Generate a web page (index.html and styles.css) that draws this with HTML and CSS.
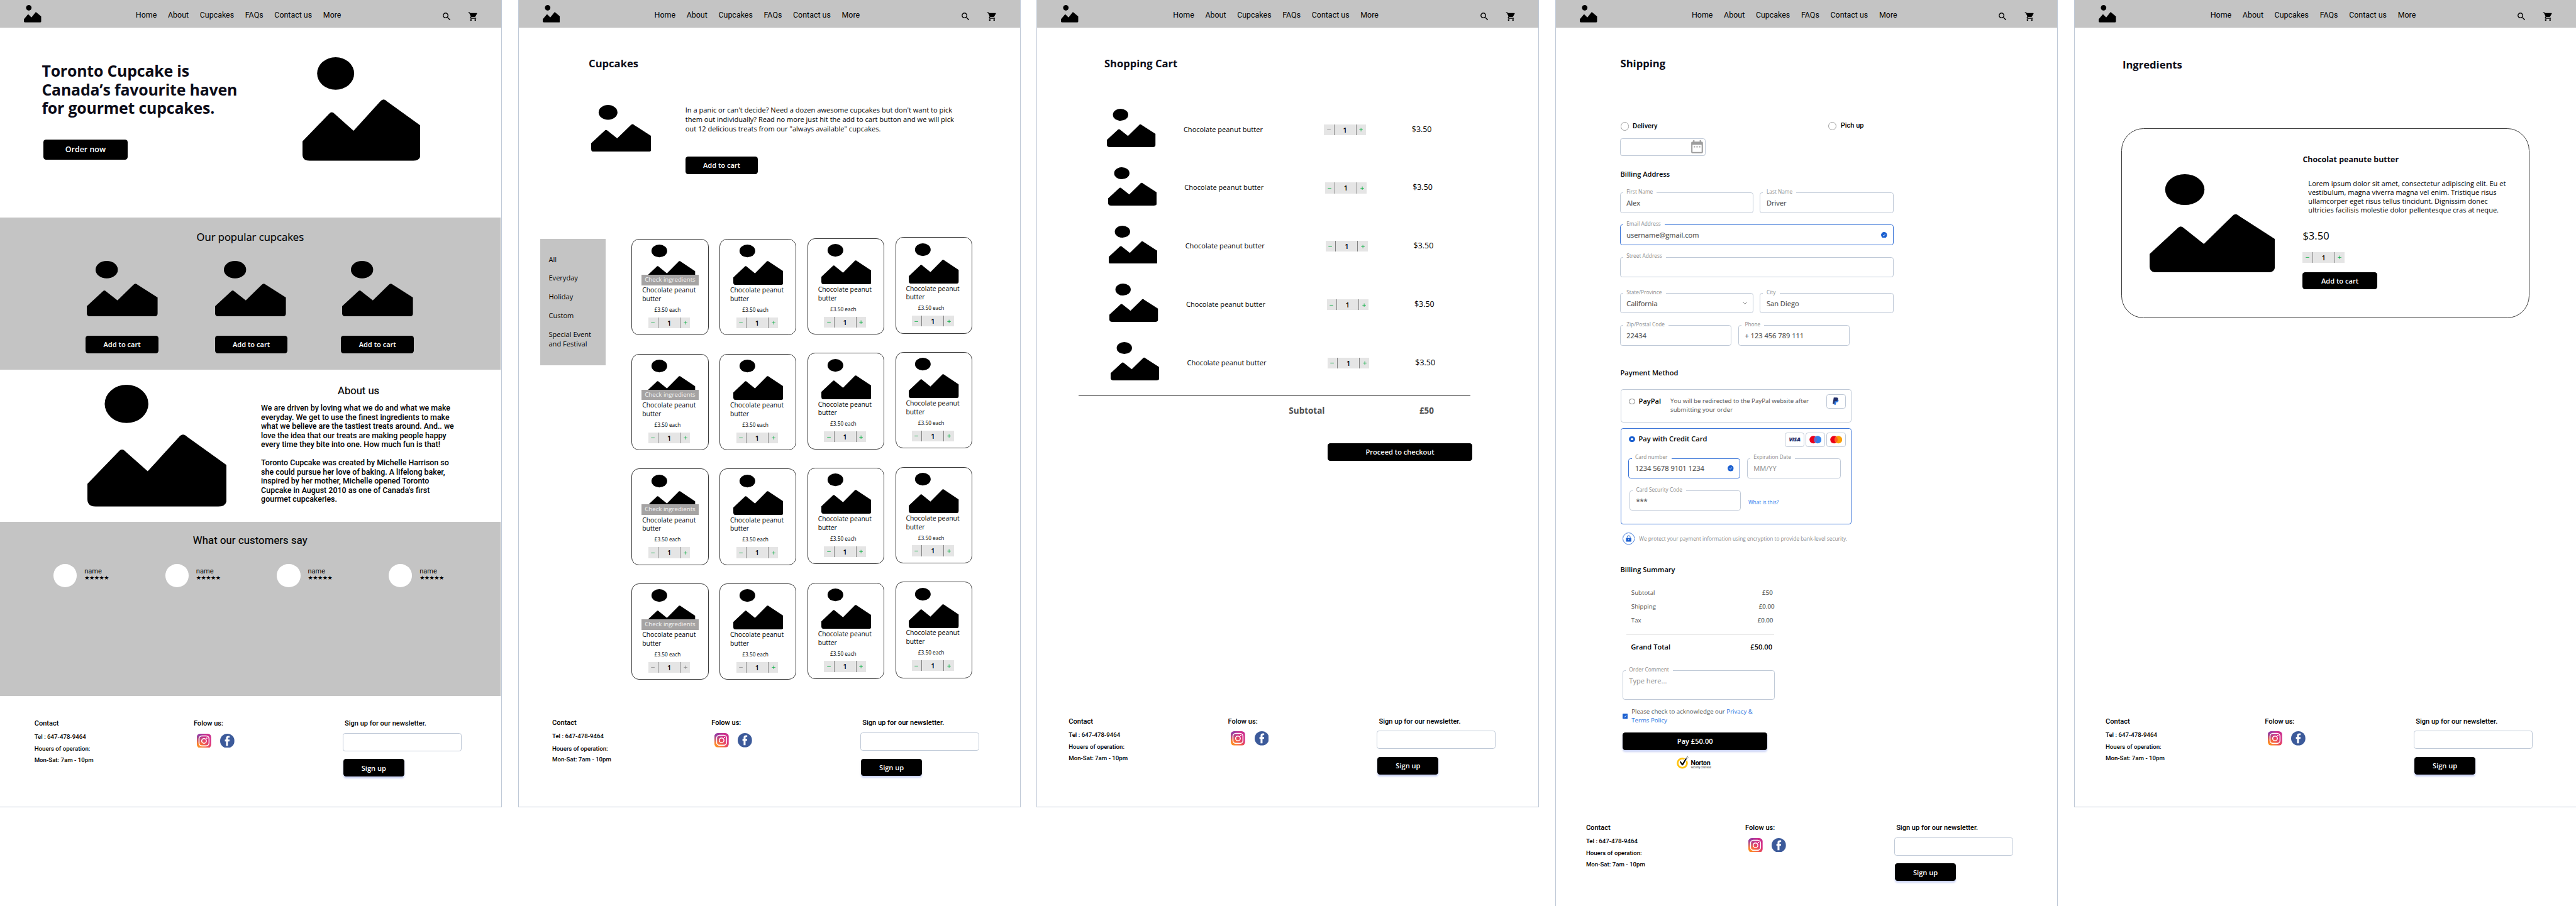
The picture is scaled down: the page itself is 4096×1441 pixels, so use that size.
FILE: index.html
```html
<!DOCTYPE html>
<html lang="en">
<head>
<meta charset="utf-8">
<title>Toronto Cupcake wireframes</title>
<link rel="stylesheet" href="styles.css">
</head>
<body>
<svg class="defs" width="0" height="0">
  <defs>
    <linearGradient id="ig" x1="0" y1="1" x2="1" y2="0">
      <stop offset="0" stop-color="#ffa31a"/><stop offset=".3" stop-color="#f76b3c"/><stop offset=".65" stop-color="#d92e7f"/><stop offset="1" stop-color="#c42f95"/>
    </linearGradient>
    <radialGradient id="ig2" cx="0" cy="0" r=".7"><stop offset="0" stop-color="#7a3ab8"/><stop offset="1" stop-color="#7a3ab8" stop-opacity="0"/></radialGradient>
    <symbol id="pic" viewBox="0 0 100 100" preserveAspectRatio="none">
      <circle cx="28.1" cy="15.7" r="15.7"/>
      <path d="M0 81.3 22.3 55Q24.8 51.4 27.5 55L43.3 71 65.7 43Q68.5 38.8 71.8 42.8L100 65.9V94Q100 100 94 100H6Q0 100 0 94Z"/>
    </symbol>
    <symbol id="search" viewBox="0 0 24 24"><path d="M15.5 14h-.79l-.28-.27A6.471 6.471 0 0 0 16 9.5 6.5 6.5 0 1 0 9.5 16c1.61 0 3.09-.59 4.23-1.57l.27.28v.79l5 4.99L20.49 19l-4.99-5zm-6 0C7.01 14 5 11.99 5 9.5S7.01 5 9.5 5 14 7.01 14 9.5 11.99 14 9.5 14z"/></symbol>
    <symbol id="cart" viewBox="0 0 24 24"><path d="M7 18c-1.1 0-1.99.9-1.99 2S5.9 22 7 22s2-.9 2-2-.9-2-2-2zM1 2v2h2l3.6 7.59-1.35 2.45c-.16.28-.25.61-.25.96 0 1.1.9 2 2 2h12v-2H7.42c-.14 0-.25-.11-.25-.25l.03-.12.9-1.63h7.45c.75 0 1.41-.41 1.75-1.03l3.58-6.49A1.003 1.003 0 0 0 20 4H5.21l-.94-2H1zm16 16c-1.1 0-1.99.9-1.99 2s.89 2 1.99 2 2-.9 2-2-.9-2-2-2z"/></symbol>
    <symbol id="calendar" viewBox="0 0 24 24"><path d="M9 11H7v2h2v-2zm4 0h-2v2h2v-2zm4 0h-2v2h2v-2zm2-7h-1V2h-2v2H8V2H6v2H5c-1.11 0-1.99.9-1.99 2L3 20c0 1.1.89 2 2 2h14c1.1 0 2-.9 2-2V6c0-1.1-.9-2-2-2zm0 16H5V9h14v11z"/></symbol>
    <symbol id="minus" viewBox="0 0 10 10"><path d="M.5 5.5h9" stroke="currentColor" stroke-width="1.3"/></symbol>
    <symbol id="plus" viewBox="0 0 10 10"><path d="M.5 5.5h9M5 1v9" stroke="currentColor" stroke-width="1.3"/></symbol>
    <symbol id="ok" viewBox="0 0 14 14"><circle cx="7" cy="7" r="7" fill="#1a5fd0"/><path d="M4.3 7.4 6.2 9.2 9.6 5" fill="none" stroke="#fff" stroke-width="1.1"/></symbol>
    <symbol id="instagram" viewBox="0 0 33 33"><rect width="33" height="33" rx="8" fill="url(#ig)"/><rect width="33" height="33" rx="8" fill="url(#ig2)"/><rect x="5" y="5" width="23" height="23" rx="6.5" fill="none" stroke="#fff" stroke-width="2.2"/><circle cx="16.5" cy="16.5" r="5.4" fill="none" stroke="#fff" stroke-width="2.2"/><circle cx="23" cy="10" r="1.5" fill="#fff"/></symbol>
    <symbol id="facebook" viewBox="0 0 33 33"><circle cx="16.5" cy="16.5" r="16.5" fill="#3c5a9a"/><path d="M13.6 28V17.6H11v-4.1h2.6v-3.1c0-3.6 1.8-5.4 5.3-5.4h3v4h-2.1c-1.4 0-1.8.7-1.8 1.9v2.6h3.9l-.5 4.1H18V28z" fill="#fff"/></symbol>
  </defs>
</svg>
<div class="board">

<section class="frame">
  <header class="top"><svg class="logo"><use href="#pic"/></svg><nav><a>Home</a><a>About</a><a>Cupcakes</a><a>FAQs</a><a>Contact us</a><a>More</a></nav><svg class="ico search"><use href="#search"/></svg><svg class="ico"><use href="#cart"/></svg></header>
  <div class="hero">
    <div class="hero-copy"><h1>Toronto Cupcake is<br>Canada’s favourite haven<br>for gourmet cupcakes.</h1><button class="btn order">Order now</button></div>
    <svg class="hero-pic"><use href="#pic"/></svg>
  </div>
  <div class="popular">
    <h2>Our popular cupcakes</h2>
    <div class="trio">
      <div><svg><use href="#pic"/></svg><button class="btn">Add to cart</button></div>
      <div><svg><use href="#pic"/></svg><button class="btn">Add to cart</button></div>
      <div><svg><use href="#pic"/></svg><button class="btn">Add to cart</button></div>
    </div>
  </div>
  <div class="about">
    <svg><use href="#pic"/></svg>
    <div class="about-copy"><h2>About us</h2>
      <p>We are driven by loving what we do and what we make<br>everyday. We get to use the finest ingredients to make<br>what we believe are the tastiest treats around. And.. we<br>love the idea that our treats are making people happy<br>every time they bite into one. How much fun is that!</p>
      <p>Toronto Cupcake was created by Michelle Harrison so<br>she could pursue her love of baking. A lifelong baker,<br>inspired by her mother, Michelle opened Toronto<br>Cupcake in August 2010 as one of Canada's first<br>gourmet cupcakeries.</p></div>
  </div>
  <div class="customers">
    <h2>What our customers say</h2>
    <div class="people">
      <div class="person"><i></i><div>name<b>★★★★★</b></div></div>
      <div class="person"><i></i><div>name<b>★★★★★</b></div></div>
      <div class="person"><i></i><div>name<b>★★★★★</b></div></div>
      <div class="person"><i></i><div>name<b>★★★★★</b></div></div>
    </div>
  </div>
  <footer>
    <div class="contact"><h4>Contact</h4><p>Tel : 647-478-9464</p><p>Houers of operation:</p><p>Mon-Sat: 7am - 10pm</p></div>
    <div class="social"><h4>Folow us:</h4><div><svg><use href="#instagram"/></svg><svg><use href="#facebook"/></svg></div></div>
    <div class="news"><h4>Sign up for our newsletter.</h4><span class="box"></span><button class="btn glow">Sign up</button></div>
  </footer>
</section>

<section class="frame f2">
  <header class="top"><svg class="logo"><use href="#pic"/></svg><nav><a>Home</a><a>About</a><a>Cupcakes</a><a>FAQs</a><a>Contact us</a><a>More</a></nav><svg class="ico search"><use href="#search"/></svg><svg class="ico"><use href="#cart"/></svg></header>
  <h3 class="title">Cupcakes</h3>
  <div class="intro">
    <svg><use href="#pic"/></svg>
    <div><p>In a panic or can't decide? Need a dozen awesome cupcakes but don't want to pick<br>them out individually? Read no more just hit the add to cart button and we will pick<br>out 12 delicious treats from our "always available" cupcakes.</p><button class="btn">Add to cart</button></div>
  </div>
  <div class="catalog">
    <aside><a>All</a><a>Everyday</a><a>Holiday</a><a>Custom</a><a>Special Event<br>and Festival</a></aside>
    <div class="col">
      <article class="card"><svg class="pic"><use href="#pic"/></svg><span class="check">Check ingredients</span><p>Chocolate peanut<br>butter</p><small>£3.50 each</small><div class="qty"><svg><use href="#minus"/></svg><b>1</b><svg><use href="#plus"/></svg></div></article>
      <article class="card"><svg class="pic"><use href="#pic"/></svg><span class="check">Check ingredients</span><p>Chocolate peanut<br>butter</p><small>£3.50 each</small><div class="qty"><svg><use href="#minus"/></svg><b>1</b><svg><use href="#plus"/></svg></div></article>
      <article class="card"><svg class="pic"><use href="#pic"/></svg><span class="check">Check ingredients</span><p>Chocolate peanut<br>butter</p><small>£3.50 each</small><div class="qty"><svg><use href="#minus"/></svg><b>1</b><svg><use href="#plus"/></svg></div></article>
      <article class="card"><svg class="pic"><use href="#pic"/></svg><span class="check">Check ingredients</span><p>Chocolate peanut<br>butter</p><small>£3.50 each</small><div class="qty"><svg class="off"><use href="#minus"/></svg><b>1</b><svg class="off"><use href="#plus"/></svg></div></article>
    </div>
    <div class="col">
      <article class="card"><svg class="pic"><use href="#pic"/></svg><p>Chocolate peanut<br>butter</p><small>£3.50 each</small><div class="qty"><svg><use href="#minus"/></svg><b>1</b><svg><use href="#plus"/></svg></div></article>
      <article class="card"><svg class="pic"><use href="#pic"/></svg><p>Chocolate peanut<br>butter</p><small>£3.50 each</small><div class="qty"><svg><use href="#minus"/></svg><b>1</b><svg><use href="#plus"/></svg></div></article>
      <article class="card"><svg class="pic"><use href="#pic"/></svg><p>Chocolate peanut<br>butter</p><small>£3.50 each</small><div class="qty"><svg><use href="#minus"/></svg><b>1</b><svg><use href="#plus"/></svg></div></article>
      <article class="card"><svg class="pic"><use href="#pic"/></svg><p>Chocolate peanut<br>butter</p><small>£3.50 each</small><div class="qty"><svg class="off"><use href="#minus"/></svg><b>1</b><svg><use href="#plus"/></svg></div></article>
    </div>
    <div class="col c3">
      <article class="card"><svg class="pic"><use href="#pic"/></svg><p>Chocolate peanut<br>butter</p><small>£3.50 each</small><div class="qty"><svg><use href="#minus"/></svg><b>1</b><svg><use href="#plus"/></svg></div></article>
      <article class="card"><svg class="pic"><use href="#pic"/></svg><p>Chocolate peanut<br>butter</p><small>£3.50 each</small><div class="qty"><svg><use href="#minus"/></svg><b>1</b><svg><use href="#plus"/></svg></div></article>
      <article class="card"><svg class="pic"><use href="#pic"/></svg><p>Chocolate peanut<br>butter</p><small>£3.50 each</small><div class="qty"><svg><use href="#minus"/></svg><b>1</b><svg><use href="#plus"/></svg></div></article>
      <article class="card"><svg class="pic"><use href="#pic"/></svg><p>Chocolate peanut<br>butter</p><small>£3.50 each</small><div class="qty"><svg><use href="#minus"/></svg><b>1</b><svg><use href="#plus"/></svg></div></article>
    </div>
    <div class="col c4">
      <article class="card"><svg class="pic"><use href="#pic"/></svg><p>Chocolate peanut<br>butter</p><small>£3.50 each</small><div class="qty"><svg><use href="#minus"/></svg><b>1</b><svg><use href="#plus"/></svg></div></article>
      <article class="card"><svg class="pic"><use href="#pic"/></svg><p>Chocolate peanut<br>butter</p><small>£3.50 each</small><div class="qty"><svg><use href="#minus"/></svg><b>1</b><svg><use href="#plus"/></svg></div></article>
      <article class="card"><svg class="pic"><use href="#pic"/></svg><p>Chocolate peanut<br>butter</p><small>£3.50 each</small><div class="qty"><svg><use href="#minus"/></svg><b>1</b><svg><use href="#plus"/></svg></div></article>
      <article class="card"><svg class="pic"><use href="#pic"/></svg><p>Chocolate peanut<br>butter</p><small>£3.50 each</small><div class="qty"><svg><use href="#minus"/></svg><b>1</b><svg><use href="#plus"/></svg></div></article>
    </div>
  </div>
  <footer>
    <div class="contact"><h4>Contact</h4><p>Tel : 647-478-9464</p><p>Houers of operation:</p><p>Mon-Sat: 7am - 10pm</p></div>
    <div class="social"><h4>Folow us:</h4><div><svg><use href="#instagram"/></svg><svg><use href="#facebook"/></svg></div></div>
    <div class="news"><h4>Sign up for our newsletter.</h4><span class="box"></span><button class="btn glow">Sign up</button></div>
  </footer>
</section>

<section class="frame f3">
  <header class="top"><svg class="logo"><use href="#pic"/></svg><nav><a>Home</a><a>About</a><a>Cupcakes</a><a>FAQs</a><a>Contact us</a><a>More</a></nav><svg class="ico search"><use href="#search"/></svg><svg class="ico"><use href="#cart"/></svg></header>
  <h3 class="title">Shopping Cart</h3>
  <div class="lines">
    <div class="line"><svg class="pic"><use href="#pic"/></svg><p>Chocolate peanut butter</p><div class="qty"><svg class="off"><use href="#minus"/></svg><b>1</b><svg><use href="#plus"/></svg></div><span>$3.50</span></div>
    <div class="line"><svg class="pic"><use href="#pic"/></svg><p>Chocolate peanut butter</p><div class="qty"><svg><use href="#minus"/></svg><b>1</b><svg><use href="#plus"/></svg></div><span>$3.50</span></div>
    <div class="line"><svg class="pic"><use href="#pic"/></svg><p>Chocolate peanut butter</p><div class="qty"><svg><use href="#minus"/></svg><b>1</b><svg><use href="#plus"/></svg></div><span>$3.50</span></div>
    <div class="line"><svg class="pic"><use href="#pic"/></svg><p>Chocolate peanut butter</p><div class="qty"><svg><use href="#minus"/></svg><b>1</b><svg><use href="#plus"/></svg></div><span>$3.50</span></div>
    <div class="line"><svg class="pic"><use href="#pic"/></svg><p>Chocolate peanut butter</p><div class="qty"><svg><use href="#minus"/></svg><b>1</b><svg><use href="#plus"/></svg></div><span>$3.50</span></div>
  </div>
  <div class="cart-sum"><span>Subtotal</span><span>£50</span></div>
  <button class="btn wide checkout">Proceed to checkout</button>
  <footer>
    <div class="contact"><h4>Contact</h4><p>Tel : 647-478-9464</p><p>Houers of operation:</p><p>Mon-Sat: 7am - 10pm</p></div>
    <div class="social"><h4>Folow us:</h4><div><svg><use href="#instagram"/></svg><svg><use href="#facebook"/></svg></div></div>
    <div class="news"><h4>Sign up for our newsletter.</h4><span class="box"></span><button class="btn glow">Sign up</button></div>
  </footer>
</section>

<section class="frame f4">
  <header class="top"><svg class="logo"><use href="#pic"/></svg><nav><a>Home</a><a>About</a><a>Cupcakes</a><a>FAQs</a><a>Contact us</a><a>More</a></nav><svg class="ico search"><use href="#search"/></svg><svg class="ico"><use href="#cart"/></svg></header>
  <div class="form">
    <h3 class="title">Shipping</h3>
    <div class="ship"><label><i></i>Delivery</label><label><i></i>Pich up</label></div>
    <div class="box date"><svg><use href="#calendar"/></svg></div>
    <h5 class="h-address">Billing Address</h5>
    <div class="row names"><div class="field w304"><label>First Name</label>Alex</div><div class="field w304"><label>Last Name</label>Driver</div></div>
    <div class="row"><div class="field w626 on"><label>Email Address</label>username@gmail.com<svg class="tick"><use href="#ok"/></svg></div></div>
    <div class="row"><div class="field w626"><label>Street Address</label></div></div>
    <div class="row state"><div class="field w304"><label>State/Province</label>California<svg class="chev" viewBox="0 0 10 6"><path d="M.5.5 5 5.3 9.5.5" fill="none" stroke="#4f4f4f"/></svg></div><div class="field w304"><label>City</label>San Diego</div></div>
    <div class="row"><div class="field w254"><label>Zip/Postal Code</label>22434</div><div class="field w254"><label>Phone</label>+ 123 456 789 111</div></div>
    <h5 class="h-pay">Payment Method</h5>
    <div class="pay paypal"><i class="radio"></i><strong>PayPal</strong><p>You will be redirected to the PayPal website after<br>submitting your order</p>
      <span class="badge"><svg width="16" height="18" viewBox="0 0 16 18"><path d="M5 5h7.6c2 1.300 1.500 6.500-3.600 6.500H8L7.300 17H3.500z" fill="#2f80ed"/><path d="M2.600.5h6.300c3.200 0 4.200 1.800 3.700 4.300-.6 3.200-2.600 4.400-5.600 4.400H4.900L3.900 15H0z" fill="#22306b"/></svg></span></div>
    <div class="pay credit">
      <div class="pay-head"><i class="radio on"></i><strong>Pay with Credit Card</strong><span class="badge visa">VISA</span><span class="badge"><svg width="28" height="18" viewBox="0 0 28 18"><circle cx="9" cy="9" r="8.700" fill="#eb001b"/><circle cx="19" cy="9" r="8.700" fill="#2f80ed"/><path d="M14 1.900a8.700 8.700 0 0 1 0 14.200 8.700 8.700 0 0 1 0-14.200" fill="#6c6bbd"/></svg></span><span class="badge"><svg width="28" height="18" viewBox="0 0 28 18"><circle cx="9" cy="9" r="8.700" fill="#eb001b"/><circle cx="19" cy="9" r="8.700" fill="#f99f05"/><path d="M14 1.900a8.700 8.700 0 0 1 0 14.200 8.700 8.700 0 0 1 0-14.200" fill="#ff5f1f"/></svg></span></div>
      <div class="row"><div class="field w254 on"><label>Card number</label>1234 5678 9101 1234<svg class="tick"><use href="#ok"/></svg></div><div class="field w213 hint"><label>Expiration Date</label>MM/YY</div></div>
      <div class="row"><div class="field w254"><label>Card Security Code</label>***</div><a>What is this?</a></div>
    </div>
    <div class="secure"><svg width="28" height="28" viewBox="0 0 28 28"><circle cx="14" cy="14" r="13.300" fill="none" stroke="#1a5fd0" stroke-width="1.200"/><path d="M10.500 13v-2.500a3.500 3.500 0 0 1 7 0V13" fill="none" stroke="#1a5fd0" stroke-width="1.300"/><rect x="8" y="12.500" width="12" height="8.500" rx=".8" fill="#1a5fd0"/><circle cx="14" cy="16.700" r="1" fill="#fff"/></svg>We protect your payment information using encryption to provide bank-level security.</div>
    <h5 class="h-sum">Billing Summary</h5>
    <dl><div><dt>Subtotal</dt><dd>£50</dd></div><div><dt>Shipping</dt><dd>£0.00</dd></div><div><dt>Tax</dt><dd>£0.00</dd></div></dl>
    <div class="grand"><span>Grand Total</span><span>£50.00</span></div>
    <div class="field hint comment"><label>Order Comment</label>Type here...</div>
    <div class="agree"><svg viewBox="0 0 12 12"><rect width="12" height="12" rx="1.500" fill="#1a5fd0"/><path d="M3.200 6.300 5.200 8.200 8.800 3.700" fill="none" stroke="#fff" stroke-width="1.100"/></svg><p>Please check to acknowledge our <a>Privacy &amp;<br>Terms Policy</a></p></div>
    <button class="btn wide glow">Pay £50.00</button>
    <div class="norton"><svg width="28" height="30" viewBox="0 0 28 30"><circle cx="13" cy="17" r="10.800" fill="none" stroke="#ffc20e" stroke-width="4"/><path d="M8.500 14.500 13 21 22.500 6" fill="none" stroke="#fff" stroke-width="6"/><path d="M7 14.200 9.500 12.800 13 18 20.500 6 23.500 6.500 14.500 22 12 22.200z"/><path d="M22 5.500 25 2M24 6.500 27 3M23 3l3.500-2.500" stroke="#000" stroke-width="1" stroke-dasharray="1.500 .8"/></svg><div>Norton<small>Security Checkout</small></div></div>
  </div>
  <footer>
    <div class="contact"><h4>Contact</h4><p>Tel : 647-478-9464</p><p>Houers of operation:</p><p>Mon-Sat: 7am - 10pm</p></div>
    <div class="social"><h4>Folow us:</h4><div><svg><use href="#instagram"/></svg><svg><use href="#facebook"/></svg></div></div>
    <div class="news"><h4>Sign up for our newsletter.</h4><span class="box"></span><button class="btn glow">Sign up</button></div>
  </footer>
</section>

<section class="frame f5">
  <header class="top"><svg class="logo"><use href="#pic"/></svg><nav><a>Home</a><a>About</a><a>Cupcakes</a><a>FAQs</a><a>Contact us</a><a>More</a></nav><svg class="ico search"><use href="#search"/></svg><svg class="ico"><use href="#cart"/></svg></header>
  <h3 class="title">Ingredients</h3>
  <div class="detail">
    <svg class="pic"><use href="#pic"/></svg>
    <div class="detail-copy"><h4>Chocolat peanute butter</h4>
      <p>Lorem ipsum dolor sit amet, consectetur adipiscing elit. Eu et<br>vestibulum, magna viverra magna vel enim. Tristique risus<br>ullamcorper eget risus tellus tincidunt. Dignissim donec<br>ultricies facilisis molestie dolor pellentesque cras at neque.</p>
      <span>$3.50</span><div class="qty"><svg><use href="#minus"/></svg><b>1</b><svg><use href="#plus"/></svg></div><button class="btn">Add to cart</button></div>
  </div>
  <footer>
    <div class="contact"><h4>Contact</h4><p>Tel : 647-478-9464</p><p>Houers of operation:</p><p>Mon-Sat: 7am - 10pm</p></div>
    <div class="social"><h4>Folow us:</h4><div><svg><use href="#instagram"/></svg><svg><use href="#facebook"/></svg></div></div>
    <div class="news"><h4>Sign up for our newsletter.</h4><span class="box"></span><button class="btn glow">Sign up</button></div>
  </footer>
</section>
</div>
</body>
</html>
```
FILE: styles.css
```css
:root {
  --grey: #c4c4c4;
  --line: #bfc9d7;
  --blue: #1a5fd0;
  --text: #4f4f4f;
  --muted: #8b8b8b;
}
* { box-sizing: border-box; margin: 0; padding: 0; }
html { background: #fff; overflow: hidden; }
body { font: 16px/22px "Open Sans", sans-serif; color: #000; }
svg { display: block; flex: none; }
.defs { position: absolute; }

/* Frames are laid out at 1152px wide and scaled together. */
.board { zoom: .69189; display: flex; align-items: flex-start; gap: 40px; width: 5920px; }
.frame { width: 1152px; height: 1855px; flex: none; display: flex; flex-direction: column; align-items: flex-start; background: #fff; outline: 1px solid var(--line); outline-offset: -1px; }
.f4 { height: 2082px; }

.top { width: 1152px; height: 64px; background: var(--grey); display: flex; align-items: flex-start; padding-left: 55px; flex: none; }
.logo { width: 40px; height: 40px; margin-top: 12px; }
.top nav { display: flex; gap: 25.500px; margin: 25px 0 0 217px; width: 703px; font: 18px/21px Roboto, sans-serif; white-space: nowrap; }
.ico { width: 24px; height: 24px; margin-top: 26px; }
.search { margin-right: 37px; }

.btn { display: flex; align-items: center; justify-content: center; width: 167px; height: 40px; border: 0; border-radius: 6px; background: #000; color: #fff; font: 600 16px/22px "Open Sans", sans-serif; flex: none; white-space: nowrap; }
.wide { width: 333px; }
.glow { box-shadow: 0 4px 4px rgba(65, 93, 214, .28); }
.box { display: block; border-radius: 4px; outline: 1px solid var(--line); outline-offset: -1px; }
.title { font: 700 24px/32px "Open Sans", sans-serif; color: #0c0c18; white-space: nowrap; }

/* home */
.hero { height: 436px; display: flex; padding-left: 96px; flex: none; }
.hero-copy { width: 599px; padding-top: 77.5px; }
h1 { font: 700 36px/43px "Open Sans", sans-serif; letter-spacing: -.280px; color: #0c0c18; white-space: nowrap; }
.order { width: 193px; height: 46px; margin: 50.5px 0 0 4px; font-size: 18px; }
.hero-pic { width: 271px; height: 238px; margin-top: 68px; }
.popular { width: 1150px; height: 350px; background: var(--grey); padding-top: 28.7px; flex: none; }
.popular h2 { font: 400 24px/32px "Open Sans", sans-serif; text-align: center; -webkit-text-stroke: .300px #000; }
.trio { display: flex; margin: 39px 0 0 197px; }
.trio div { width: 297px; }
.trio div:nth-child(2) { width: 290px; }
.trio svg { width: 163px; height: 128px; margin-left: 3px; }
.trio div:nth-child(2) svg { margin-left: 0; }
.trio .btn { margin-top: 44px; }
.about { height: 350px; padding: 35px 0 0 201px; display: flex; gap: 79px; flex: none; }
.about svg { width: 320px; height: 280px; }
.about-copy { width: 448px; font: 500 18px/21px Roboto, sans-serif; white-space: nowrap; }
.about h2 { font: 400 24px/28px Roboto, sans-serif; text-align: center; margin-bottom: 15px; -webkit-text-stroke: .300px #000; }
.about p + p { margin-top: 21px; }
.customers { width: 1150px; height: 400px; background: var(--grey); padding-top: 28.800px; flex: none; }
.customers h2 { font: 400 24px/28px Roboto, sans-serif; letter-spacing: .200px; text-align: center; -webkit-text-stroke: .300px #000; }
.people { display: flex; margin: 40px 0 0 123px; }
.person { display: flex; gap: 17px; width: 257px; }
.person i { width: 54px; height: 53px; border-radius: 50%; background: #fff; }
.person div { padding-top: 7px; font: 16px/19px Roboto, sans-serif; }
.person b { display: block; font: 13.200px/12px "DejaVu Sans", sans-serif; letter-spacing: -.650px; }

/* footer */
footer { height: 255px; margin-top: auto; padding: 53.500px 0 0 79px; display: flex; font-family: Roboto, sans-serif; flex: none; white-space: nowrap; }
footer h4 { font: 500 16px/20px Roboto, sans-serif; }
.contact { width: 366px; font: 500 14px/18px Roboto, sans-serif; }
.contact p { margin-top: 11.700px; }
.contact p + p { margin-top: 10px; }
.contact p + p + p { margin-top: 7px; }
.social { width: 344px; }
.social div { display: flex; gap: 21px; margin: 12.500px 0 0 7px; }
.social svg { width: 33px; height: 33px; }
.news h4 { margin-left: 3px; }
.news .box { width: 270px; height: 39px; margin: 12.500px 0 20px; }
.news .btn { width: 140px; }
.f2 footer { padding: 52.500px 0 0 77px; }
.f3 footer { padding: 49px 0 0 72px; }
.f4 footer { padding: 66.500px 0 0 69px; }
.f5 footer { padding: 49px 0 0 71px; }

/* catalogue */
.f2 .title { margin: 65.700px 0 79.300px 161px; }
.intro { display: flex; gap: 79px; margin-left: 166px; white-space: nowrap; }
.intro svg { width: 138px; height: 108px; }
.intro .btn { margin-top: 53px; }
.catalog { display: flex; margin: 147px 0 0 50px; align-items: flex-start; }
aside { width: 150px; height: 290px; margin: 3px 61px 0 0; padding: 34.800px 0 0 19px; background: var(--grey); display: flex; flex-direction: column; gap: 21.200px; }
.col { display: flex; flex-direction: column; gap: 45.500px; margin: 4px 28px 0 0; }
.c3 { margin-top: 2px; }
.c4 { margin-top: 0; }
.card { position: relative; width: 174px; height: 218.500px; border-radius: 16px; outline: 1px solid #3a3a3a; outline-offset: -1px; padding-top: 12px; }
.card .pic { width: 115px; height: 93px; margin-left: 30px; }
.check { position: absolute; left: 21px; top: 81px; width: 132px; height: 24px; background: #a5a3a3; color: #f5f5f5; font-size: 14px; line-height: 24px; text-align: center; white-space: nowrap; }
.card p { font-size: 15px; line-height: 20px; margin: 2.200px 0 0 23px; white-space: nowrap; }
.card small { display: block; font-size: 12px; line-height: 16px; margin: 6px 0 9.700px 51px; }
.card .qty { margin-left: 37px; }
.qty { display: flex; align-items: center; width: 96px; height: 25px; background: #e5e5e5; color: #00ab3c; flex: none; }
.qty svg { width: 9px; height: 9px; margin: 0 7px 0 6px; }
.qty b + svg { margin: 0 6px 0 7px; }
.qty .off { color: #828282; }
.qty b { flex: 1; height: 25px; border: solid #828282; border-width: 0 1px; color: #000; font: 600 16px/25px "Open Sans", sans-serif; text-align: center; }

/* cart */
.f3 .title { margin: 66.400px 0 87.600px 154px; }
.lines { display: flex; flex-direction: column; gap: 46.200px; width: 900px; margin-left: 95px; padding: 0 0 33px 65px; border-bottom: 2px solid #000; }
.line { display: grid; grid-template-columns: 176px 323px 201.500px auto; height: 88px; align-items: start; white-space: nowrap; }
.line .pic { width: 112px; height: 88px; }
.line > :not(.pic) { margin-top: 35.500px; }
.line span { font-size: 18px; line-height: 24px; }
.line:nth-child(2) { margin-left: 2px; }
.line:nth-child(3) { margin-left: 4px; }
.line:nth-child(4) { margin-left: 6px; }
.line:nth-child(5) { margin-left: 8px; }
.cart-sum { display: flex; margin: 22px 0 60px 578px; font: 700 19.500px/28px "Open Sans", sans-serif; color: var(--text); }
.cart-sum span:first-child { width: 300px; }
.checkout { margin-left: 667px; }

/* shipping form */
.form { padding-left: 148px; }
.f4 .title { margin: 65.700px 0 118.300px; }
.ship { display: flex; height: 20px; margin-bottom: 19px; font: 500 16px/20px Roboto, sans-serif; }
.ship label { display: flex; gap: 9px; width: 478px; }
.ship i { width: 19px; height: 19px; margin-top: 1px; border: 2px solid #a0a0a0; border-radius: 50%; }
.ship label + label { margin-top: -1px; }
.date { width: 195px; height: 38px; padding: 1px 0 0 158.500px; box-shadow: 0 1px 2px rgba(0, 0, 0, .15); }
.date svg { width: 36px; height: 36px; fill: #9d9d9d; }
h5 { font: 600 16px/22px "Open Sans", sans-serif; }
.h-address { margin: 31.800px 0 33.200px; }
.h-pay { margin: 52.300px 0 28.700px; }
.h-sum { margin: 45.400px 0 32.200px; }
.row { display: flex; gap: 18px; margin-top: 30px; }
.names { margin-top: 0; }
.state { margin-top: 39px; }
.field { position: relative; display: flex; align-items: center; height: 44px; padding-left: 14px; border-radius: 4px; outline: 1px solid var(--line); outline-offset: -1px; color: var(--text); -webkit-text-stroke: .250px currentColor; white-space: nowrap; }
.field.on { outline-color: #3b75d8; }
.field label { position: absolute; left: 6px; top: -12px; padding: 0 9px 0 8px; background: #fff; color: var(--muted); font-size: 12px; line-height: 16px; -webkit-text-stroke: 0; }
.hint { color: var(--muted); -webkit-text-stroke: 0; }
.w304 { width: 304px; }
.w626 { width: 626px; }
.w254 { width: 254px; }
.w213 { width: 213px; }
.tick { width: 14px; height: 14px; margin: 0 13px 0 auto; }
.chev { width: 10px; height: 6px; margin: 0 13px 0 auto; }
.pay { width: 528px; margin-left: 1.500px; border-radius: 4px; outline: 1px solid var(--line); outline-offset: -1px; }
.pay strong { font-weight: 600; width: 73px; white-space: nowrap; }
.radio { width: 14px; height: 14px; margin-right: 8px; border: 1px solid #828282; border-radius: 50%; flex: none; }
.radio.on { border: 5px solid var(--blue); }
.paypal { height: 73.500px; display: flex; padding: 12px 13px 0 18.500px; }
.paypal .radio { margin-top: 8px; }
.paypal strong { margin-top: 3px; }
.paypal p { margin-top: 4.500px; font-size: 14px; line-height: 20px; color: var(--text); white-space: nowrap; }
.badge { width: 42.500px; height: 30px; display: flex; align-items: center; justify-content: center; border-radius: 4px; outline: 1px solid var(--line); outline-offset: -1px; flex: none; }
.paypal .badge { margin-left: auto; }
.visa { font: italic 800 13px/30px "Open Sans", sans-serif; color: #22306b; letter-spacing: -.600px; }
.credit { height: 218.500px; margin-top: 16px; outline-color: #3b75d8; padding: 10.500px 13px 0 18.500px; }
.pay-head { display: flex; height: 30px; gap: 5px; }
.pay-head .radio { margin: 7px 3px 0 0; }
.pay-head strong { width: auto; margin: 2px auto 0 0; }
.credit .row { margin-top: 29px; }
.credit .row + .row { margin: 30px 0 0 2px; }
.credit a { align-self: center; font-size: 12px; line-height: 16px; color: #2f80ed; margin-top: 8px; }
.secure { display: flex; align-items: center; gap: 10px; margin: 21px 0 0 5px; font-size: 12px; color: var(--muted); white-space: nowrap; }
dl { width: 354px; padding-left: 25px; font-size: 14px; line-height: 20px; color: var(--text); }
dl div { display: flex; justify-content: space-between; padding-right: 4px; margin-bottom: 12px; }
dl div:nth-child(2) { padding-right: 0; }
dl div:nth-child(3) { padding-right: 3px; margin: 0; }
dd { -webkit-text-stroke: .250px currentColor; }
.grand { width: 340px; margin: 22px 0 0 14px; padding: 16.300px 5px 0 10px; border-top: 2px solid #e4e4e4; display: flex; justify-content: space-between; font-weight: 600; }
.comment { width: 348px; height: 64.500px; margin: 44.200px 0 0 6px; align-items: flex-start; padding-top: 11px; }
.agree { display: flex; gap: 8.500px; margin: 20px 0 17.400px 5px; font-size: 14px; line-height: 20px; color: var(--text); white-space: nowrap; }
.agree svg { width: 12px; height: 12px; margin-top: 14.400px; }
.agree a { color: #2b74e0; }
.form .wide { margin-left: 5px; }
.norton { display: flex; gap: 4px; margin: 13px 0 0 130px; }
.norton div { padding-top: 10px; font: 700 14px/14px Inter, sans-serif; letter-spacing: -.500px; }
.norton small { display: block; font: 5.400px/8px Inter, sans-serif; letter-spacing: 0; }

/* ingredients */
.f5 .title { margin: 69.700px 0 130.300px 110px; }
.detail { width: 934px; height: 434px; margin-left: 109px; padding-left: 63px; display: flex; gap: 64px; border-radius: 50px; outline: 1px solid #3a3a3a; outline-offset: -1px; }
.detail .pic { width: 288px; height: 226px; margin-top: 104px; }
.detail-copy { padding-top: 60px; white-space: nowrap; }
.detail-copy h4 { font: 700 18px/24px "Open Sans", sans-serif; color: #0c0c18; }
.detail-copy p { line-height: 20.200px; margin: 31.600px 0 33.400px 13px; }
.detail-copy span { display: block; font-size: 24px; line-height: 32px; margin-bottom: 21.700px; }
.detail-copy .btn { margin-top: 21px; width: 171px; }
```
